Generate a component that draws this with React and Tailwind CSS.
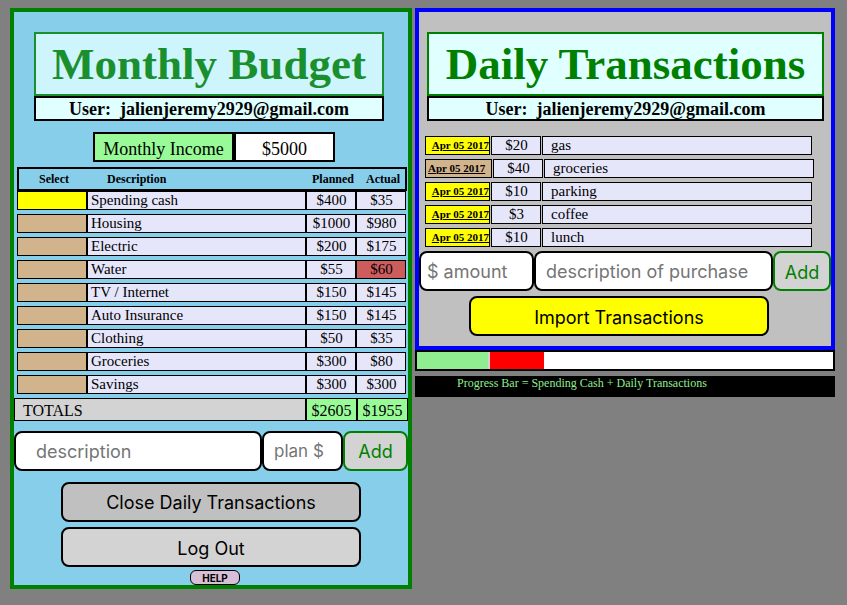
const budgetRows = [
  { name: 'Spending cash', planned: 400, actual: 35, selected: true },
  { name: 'Housing', planned: 1000, actual: 980 },
  { name: 'Electric', planned: 200, actual: 175 },
  { name: 'Water', planned: 55, actual: 60 },
  { name: 'TV / Internet', planned: 150, actual: 145 },
  { name: 'Auto Insurance', planned: 150, actual: 145 },
  { name: 'Clothing', planned: 50, actual: 35 },
  { name: 'Groceries', planned: 300, actual: 80 },
  { name: 'Savings', planned: 300, actual: 300 },
];

const transactions = [
  { date: 'Apr 05 2017', amount: 20, description: 'gas' },
  { date: 'Apr 05 2017', amount: 40, description: 'groceries', picked: true },
  { date: 'Apr 05 2017', amount: 10, description: 'parking' },
  { date: 'Apr 05 2017', amount: 3, description: 'coffee' },
  { date: 'Apr 05 2017', amount: 10, description: 'lunch' },
];

const sans = "font-['Inter','Liberation_Sans',sans-serif]";
const field = `${sans} h-10 min-w-0 rounded-lg border-2 border-black bg-white placeholder:text-[#757575] placeholder:opacity-100`;
const addButton = `${sans} h-10 shrink-0 rounded-lg border-2 border-[#008000] bg-[#d3d3d3] text-lg leading-6 text-[#008000]`;
const wideButton = `${sans} mx-auto block h-10 w-[300px] rounded-lg border-2 border-black text-lg leading-6 text-black`;

function Heading({ title, faded }) {
  return (
    <header>
      <h1
        className={`h-16 border-2 border-[#008000] bg-[#e0ffff] text-center text-[45px] leading-[60px] font-bold whitespace-nowrap text-[#008000] ${faded ? 'opacity-80' : ''}`}
      >
        {title}
      </h1>
      <p className="h-[25px] border-2 border-black bg-[#e0ffff] text-center text-lg leading-[22px] font-bold">
        User:&nbsp; jalienjeremy2929@gmail.com
      </p>
    </header>
  );
}

function BudgetTable() {
  return (
    <table className="mt-[5px] block text-[15px] leading-[17px]">
      <thead className="block pr-px pl-[3px]">
        <tr className="flex h-6 items-center border-2 border-black text-xs leading-5">
          <th className="w-[70px]">Select</th>
          <th className="flex-1 pl-[18px] text-left">Description</th>
          <th className="w-[50px] pl-1.5 text-center">Planned</th>
          <th className="w-[50px] pl-1.5 text-center">Actual</th>
        </tr>
      </thead>
      <tbody className="flex flex-col gap-1 pr-0.5 pl-[3px]">
        {budgetRows.map((row) => (
          <tr key={row.name} className="flex h-[19px]">
            <td className="flex w-[70px]">
              <button
                aria-label={`Select ${row.name}`}
                className={`w-full border border-black ${row.selected ? 'bg-[#ffff00]' : 'bg-[#d2b48c]'}`}
              />
            </td>
            <td className="flex-1 border border-black bg-[#e6e6fa] pl-[3px]">{row.name}</td>
            <td className="w-[50px] border border-black bg-[#e6e6fa] pl-px text-center">${row.planned}</td>
            <td
              className={`w-[50px] border border-black pl-px text-center ${row.actual > row.planned ? 'bg-[#cd5c5c]' : 'bg-[#e6e6fa]'}`}
            >
              ${row.actual}
            </td>
          </tr>
        ))}
      </tbody>
      <tfoot className="mt-1 block text-base leading-6">
        <tr className="flex h-[23px]">
          <th className="flex-1 border border-black bg-[#d3d3d3] pl-2 text-left font-normal">TOTALS</th>
          <td className="w-[51px] border border-black bg-[#98fb98] text-center">$2605</td>
          <td className="w-[51px] border border-black bg-[#98fb98] text-center">$1955</td>
        </tr>
      </tfoot>
    </table>
  );
}

function MonthlyBudget() {
  return (
    <section className="border-4 border-[#008000] bg-[#87ceeb]">
      <div className="pt-5 pr-6 pl-5">
        <Heading title="Monthly Budget" faded />
      </div>
      <div className="pt-[11px] pl-1.5">
        <dl className="mx-auto flex h-[30px] w-[242px] text-lg leading-[30px]">
          <dt className="w-[141px] border-2 border-black bg-[#98fb98] text-center">Monthly Income</dt>
          <dd className="flex-1 border-2 border-black bg-white text-center">$5000</dd>
        </dl>
      </div>
      <BudgetTable />
      <form className="mt-2.5 flex">
        <input aria-label="description" placeholder="description" className={`${field} flex-1 px-5 text-lg`} />
        <input aria-label="plan $" placeholder="plan $" className={`${field} w-[81px] px-2.5 text-[17px]`} />
        <button type="button" className={`${addButton} w-[65px] pt-0.5`}>Add</button>
      </form>
      <div className="mt-[11px] flex flex-col gap-[5px]">
        <button className={`${wideButton} bg-[#c0c0c0] pt-0.5`}>Close Daily Transactions</button>
        <button className={`${wideButton} bg-[#d3d3d3] pt-1`}>Log Out</button>
      </div>
      <div className="pt-[3px] pl-2">
        <button
          className={`${sans} mx-auto block h-[15px] w-[50px] rounded-md border border-black bg-[#d8bfd8] text-[10px] leading-3 font-bold`}
        >
          HELP
        </button>
      </div>
    </section>
  );
}

function DailyTransactions() {
  return (
    <section className="border-4 border-[#0000ff] bg-[#c0c0c0] pb-2.5">
      <div className="pt-5 pr-[7px] pl-2">
        <Heading title="Daily Transactions" />
      </div>
      <table className="mt-[15px] block text-[15px] leading-[17px]">
        <tbody className="flex flex-col gap-1 pl-1.5">
          {transactions.map((t) => (
            <tr key={t.description} className={`flex h-[19px] gap-px ${t.picked ? 'pr-[17px]' : 'pr-[19px]'}`}>
              <td className={`flex ${t.picked ? 'w-[67px]' : 'w-[65px]'}`}>
                <button
                  className={`w-full border border-black text-[11px] leading-[17px] font-bold whitespace-nowrap underline ${t.picked ? 'bg-[#d2b48c] pl-0.5 text-left' : 'bg-[#ffff00] text-right'}`}
                >
                  {t.date}
                </button>
              </td>
              <td className="w-[50px] border border-black bg-[#e6e6fa] pl-px text-center">${t.amount}</td>
              <td className="flex-1 border border-black bg-[#e6e6fa] pl-2">{t.description}</td>
            </tr>
          ))}
        </tbody>
      </table>
      <form className="mt-1 flex">
        <input aria-label="$ amount" placeholder="$ amount" className={`${field} w-[115px] px-1.5 text-lg`} />
        <input
          aria-label="description of purchase"
          placeholder="description of purchase"
          className={`${field} flex-1 px-2.5 text-lg`}
        />
        <button type="button" className={`${addButton} w-[58px] pt-1`}>Add</button>
      </form>
      <div className="pt-[5px] pr-3">
        <button className={`${wideButton} bg-[#ffff00] pt-1`}>Import Transactions</button>
      </div>
    </section>
  );
}

function SpendingProgress() {
  return (
    <section>
      <div className="flex h-[21px] border-2 border-black bg-white">
        <div className="w-[17.5%] border-r-2 border-[#d3d3d3] bg-[#90ee90]" />
        <div className="w-[13%] bg-[#ff0000]" />
      </div>
      <p className="mt-[5px] h-[21px] bg-black pl-[10%] text-xs leading-[15px] text-[#90ee90]">
        Progress Bar = Spending Cash + Daily Transactions
      </p>
    </section>
  );
}

export default function App() {
  return (
    <main className="min-h-screen bg-[#808080] pt-2 pr-3 pb-4 pl-2.5 font-['Liberation_Serif',serif] text-black">
      <div className="grid items-start gap-[3px] md:grid-cols-[minmax(0,402fr)_minmax(0,420fr)]">
        <MonthlyBudget />
        <div>
          <DailyTransactions />
          <SpendingProgress />
        </div>
      </div>
    </main>
  );
}
